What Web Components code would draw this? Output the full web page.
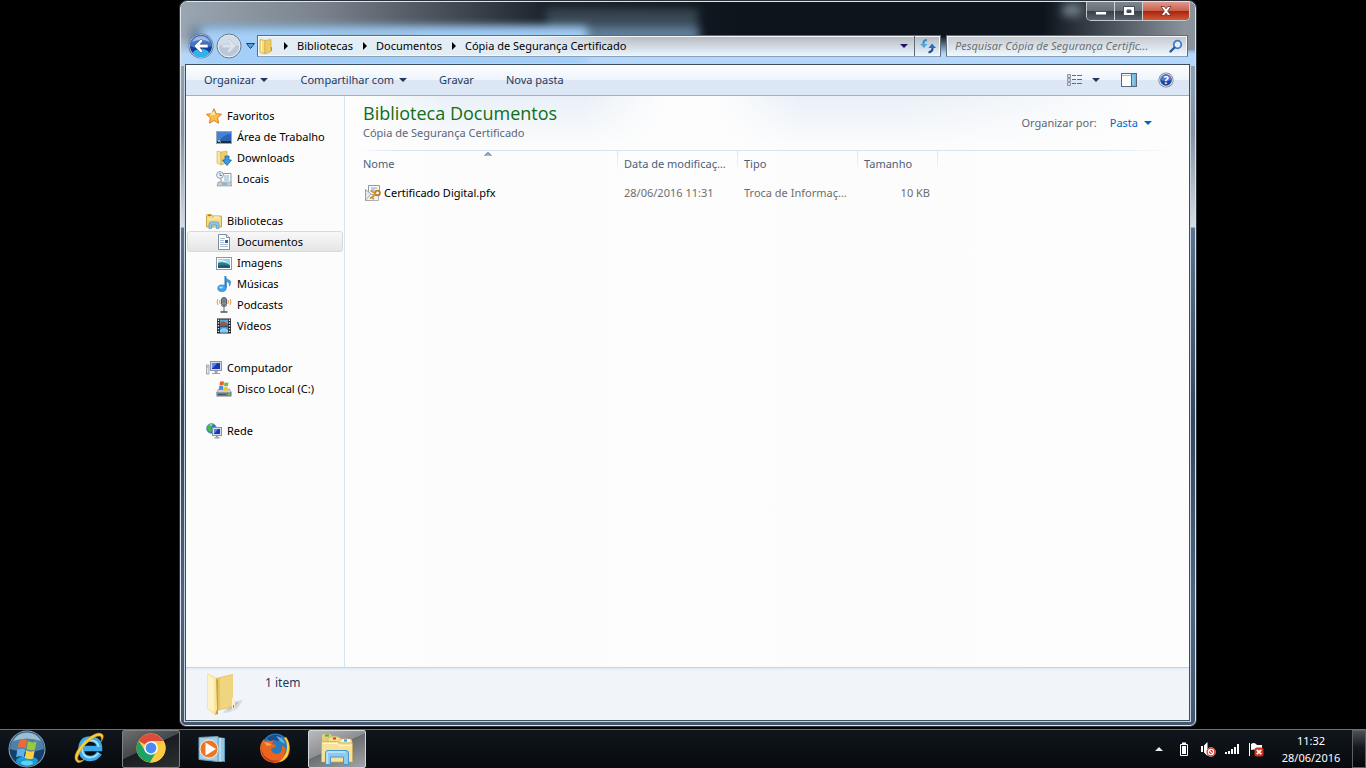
<!DOCTYPE html>
<html lang="pt-BR">
<head>
<meta charset="utf-8">
<title>Cópia de Segurança Certificado</title>
<style>
  body {
    margin: 0;
    background: #000;
    font-family: "Noto Sans", "Open Sans", sans-serif;
    font-size: 11px;
    line-height: 16px;
  }
</style>
</head>
<body>
<win-desktop>
  <explorer-window>
    <address-row slot="address"></address-row>
    <command-bar slot="commands"></command-bar>
    <nav-pane slot="nav">
      <nav-group icon="star" label="Favoritos">
        <nav-item icon="desktop">Área de Trabalho</nav-item>
        <nav-item icon="downloads">Downloads</nav-item>
        <nav-item icon="places">Locais</nav-item>
      </nav-group>
      <nav-group icon="libraries" label="Bibliotecas">
        <nav-item icon="document" selected>Documentos</nav-item>
        <nav-item icon="picture">Imagens</nav-item>
        <nav-item icon="music">Músicas</nav-item>
        <nav-item icon="podcast">Podcasts</nav-item>
        <nav-item icon="video">Vídeos</nav-item>
      </nav-group>
      <nav-group icon="computer" label="Computador">
        <nav-item icon="disk">Disco Local (C:)</nav-item>
      </nav-group>
      <nav-group icon="network" label="Rede"></nav-group>
    </nav-pane>
    <library-header slot="content">
      <span slot="title">Biblioteca Documentos</span>
      <span slot="subtitle">Cópia de Segurança Certificado</span>
    </library-header>
    <file-list slot="content"></file-list>
    <details-pane slot="details">1 item</details-pane>
  </explorer-window>
  <task-bar slot="taskbar">
    <task-button icon="ie" label="Internet Explorer"></task-button>
    <task-button icon="chrome" label="Google Chrome" state="open"></task-button>
    <task-button icon="wmp" label="Windows Media Player"></task-button>
    <task-button icon="firefox" label="Mozilla Firefox"></task-button>
    <task-button icon="explorer" label="Windows Explorer" state="active"></task-button>
    <system-tray slot="tray"></system-tray>
  </task-bar>
</win-desktop>

<script>
const ICONS = {
  caret: ["8 4", `<path d="M0 0h8L4 4z" fill="currentColor"/>`],
  recent: ["9 6", `<path d="M.5.5h8l-4 5z" fill="#58a4dc" stroke="#1b3f6e"/>`],
  crumb: ["4 8", `<path d="M0 0l4 4-4 4z" fill="currentColor"/>`],
  up: ["8 4", `<path d="M0 4h8L4 0z" fill="#e8eaec"/>`],
  sort: ["8 5", `<path d="M0 5h8L4 1z" fill="#9cc4da"/><path d="M1 4.500L4 1.500l3 3" fill="none" stroke="#3f6076"/>`],

  // navigation buttons
  back: ["26 26", `
    <circle cx="13" cy="13" r="12.500" fill="#6d7c8c"/><circle cx="13" cy="13" r="11.500" fill="#e3edf7"/>
    <circle cx="13" cy="13" r="11" fill="#123f9c"/>
    <path d="M2 13a11 11 0 0 1 22 0q-11 5-22 0z" fill="#4375c9"/><path d="M4 9a10 10 0 0 1 18 0q-9-4-18 0z" fill="#9db9e6"/>
    <ellipse cx="13" cy="20" rx="8" ry="4" fill="#2bb4ee"/>
    <path d="M13 6l-7 7 7 7 2-2-3-3.300h8v-3.400h-8L15 8z" fill="#fff" stroke="#1d428c" stroke-width=".5"/>`],
  forward: ["26 26", `
    <circle cx="13" cy="13" r="12" fill="#c5d2df" stroke="#6c7a89"/>
    <circle cx="13" cy="13" r="10.800" fill="#b9c8d8" stroke="#e9f0f6"/>
    <path d="M3 12a10 10 0 0 1 20 0q-10 4-20 0z" fill="#d3dde7"/>
    <path d="M13 6l7 7-7 7-2-2 3-3.300H6v-3.400h8L11 8z" fill="#dbe4ec" stroke="#b4c1ce" stroke-width=".5"/>`],
  refresh: ["16 16", `
    <path d="M7 2Q3 2 3.500 6" fill="none" stroke="#2f8ed6" stroke-width="2"/><path d="M0 6h7.500L4 10z" fill="#4fa8e4"/>
    <path d="M8.500 14.500q4.500-1 4-5" fill="none" stroke="#1a4f9a" stroke-width="2"/><path d="M8.500 10h7.500L12 5.500z" fill="#2a6fb8"/>`],
  search: ["14 14", `
    <circle cx="8.500" cy="5.500" r="3.800" fill="#e3eef8" stroke="#3d7cc4" stroke-width="1.800"/>
    <path d="M5.500 8.500L1.500 12.500" stroke="#2758a5" stroke-width="2.400" stroke-linecap="round"/>`],

  // caption glyphs
  minimize: ["12 12", `<rect x=".5" y="6.500" width="11" height="3.500" fill="#fff" stroke="#4b5058"/>`],
  maximize: ["12 12", `<path d="M.5 1.500h11v9H.5zM4 5v2.500h4V5z" fill="#fff" fill-rule="evenodd" stroke="#4b5058"/>`],
  close: ["12 12", `<path d="M1 1.500h3.200L6 3.800 7.800 1.500H11L7.700 6l3.300 4.500H7.800L6 8.200l-1.800 2.300H1L4.300 6z" fill="#fff" stroke="#6b2b2b" stroke-width=".8"/>`],

  // command bar
  views: ["16 16", `
    <path d="M1.500 2.500h3v3h-3zM1.500 6.500h3v3h-3zM1.500 10.500h3v3h-3z" fill="#fff" stroke="#8d97a3"/>
    <path d="M2.500 4h1M2.500 12h1" stroke="#4472b5"/><path d="M2.500 8h1" stroke="#c03a26"/>
    <path d="M6 3.500h4M11 3.500h5M6 7.500h4M11 7.500h5M6 11.500h4M11 11.500h5" stroke="#5f6b7a"/>`],
  preview: ["16 16", `
    <rect x=".5" y="1.500" width="15" height="13" fill="#fff" stroke="#56687f"/>
    <path d="M1 3.500h9" stroke="#a9b9cb"/><path d="M10.500 2v12" stroke="#56687f"/><rect x="11" y="2" width="4" height="12" fill="#6fb9dc"/>
    <path d="M12 3v10" stroke="#a7dbf0"/>`],
  help: ["16 16", `
    <circle cx="8" cy="8" r="7.600" fill="#7b828c"/><circle cx="8" cy="8" r="6.800" fill="#e1e4e8"/>
    <circle cx="8" cy="8" r="5.800" fill="#1d46a4"/><path d="M2.500 8a5.500 5.500 0 0 1 11 0Q8 10 2.500 8z" fill="#527ccf"/>
    <text x="8" y="12" font-size="11" font-weight="700" text-anchor="middle" fill="#fff">?</text>`],

  // navigation pane
  folder: ["16 16", `
    <path d="M2 1.500l5 1V16l-5-2z" fill="#f5dd84" stroke="#c9a23c" stroke-width=".6"/>
    <path d="M7 2.500l6-1v12L7 16z" fill="#eccb62" stroke="#c9a23c" stroke-width=".6"/>
    <path d="M3.500 3v11" stroke="#fff6c8"/><path d="M13 9h1v4h-1z" fill="#59a8d8"/>`],
  star: ["16 16", `
    <path d="M8 .8l2.200 4.900 5.300.6-4 3.600 1.100 5.300L8 12.500l-4.600 2.700 1.100-5.300-4-3.600 5.300-.6z" fill="#f9c14a" stroke="#e07a22"/>
    <path d="M8 3l1.200 3.600-5.600.6" fill="#fff0b0"/>`],
  desktop: ["16 16", `
    <rect x=".5" y="2.500" width="15" height="12" fill="#2d62b6" stroke="#93a8bd"/>
    <path d="M1 3h14v2Q8 5 3 12H1z" fill="#4681d2"/><path d="M1 12h14v2H1z" fill="#1c2c44"/>
    <path d="M2 11h2v2H2z" fill="#64d2ee"/><path d="M4 13h1" stroke="#f4c63b"/>`],
  downloads: ["16 16", `
    <path d="M1 1l4 1v13l-4-2z" fill="#f8e59a" stroke="#d1aa46" stroke-width=".6"/>
    <path d="M5 2l6-1v12l-6 2z" fill="#eccf70" stroke="#d1aa46" stroke-width=".6"/>
    <path d="M9 6h4v4h2.500L11 15.500 6.500 10H9z" fill="#3b9ade" stroke="#1d64a8" stroke-width=".8"/>`],
  places: ["16 16", `
    <path d="M5 2.500h10v9H5z" fill="#f7f9fb" stroke="#8c979f"/><path d="M8 5h5M8 7h5M8 9h5" stroke="#8cb4d0"/>
    <path d="M2 11h13l1 4H1z" fill="#c4cbd1" stroke="#8b949c" stroke-width=".6"/><path d="M6 13h5" stroke="#4d9bd0"/>
    <circle cx="4" cy="4" r="3.400" fill="#eef3f8" stroke="#8d9cb0"/><path d="M4 2v2.500h2" fill="none" stroke="#54657c" stroke-width=".8"/>`],
  libraries: ["16 16", `
    <path d="M.5 2.500q0-1 1-1h4l1 1.500h8q1 0 1 1v10H.5z" fill="#f2d77e" stroke="#c8a546"/>
    <path d="M2 2.500h3" stroke="#3bb23e"/><path d="M8 4h5" stroke="#fff"/><path d="M1 6h14" stroke="#fdf1bb"/>
    <path d="M3 15.500v-4q0-2.500 2.500-2.500h5q2.500 0 2.500 2.500v4h-2.500V12h-5v3.500z" fill="#8fc8ee" stroke="#4d94c8" stroke-width=".7"/>`],
  document: ["16 16", `
    <path d="M2.500.5h8l3 3v12h-11z" fill="#fff" stroke="#838f9b"/><path d="M10.500.5v3h3" fill="#dce6f0" stroke="#838f9b"/>
    <path d="M4 4.500h5M4 6.500h4M4 8.500h4M4 10.500h8M4 12.500h8" stroke="#a9bdd2"/><path d="M9 6h3v3H9z" fill="#2a62ae"/>`],
  picture: ["16 16", `
    <rect x=".5" y="2.500" width="15" height="12" fill="#fff" stroke="#8b98a5"/>
    <path d="M2 4h12v9H2z" fill="#9bd2f1"/><path d="M2 8q6-2 12 2v3H2z" fill="#2e7f6d"/><path d="M2 11q6-2 12 0v2H2z" fill="#1c558e"/>
    <path d="M2 6q5-1 8 1" stroke="#fff" fill="none"/>`],
  music: ["16 16", `
    <path d="M9 0q1 3 4 4t.5 6q.5-4-3-4.500V12" fill="#3f9fe0" stroke="#1e6fb4" stroke-width=".5"/>
    <path d="M8.500 0h1.700v12H8.500z" fill="#2b7cc4"/><ellipse cx="6" cy="12.200" rx="4.200" ry="3.300" fill="#3fa5e8" stroke="#1e6fb4" stroke-width=".6"/>
    <ellipse cx="5" cy="11.500" rx="2" ry="1" fill="#a9ddfa"/>`],
  podcast: ["16 16", `
    <path d="M2 2Q0 5 2 8M4.200 3Q3 5 4.200 7M14 2q2 3 0 6M11.800 3q1.200 2 0 4" fill="none" stroke="#eb9a35"/>
    <rect x="5.500" y=".5" width="5" height="8" rx="2.500" fill="#9aa3ad" stroke="#4c545e"/><path d="M6 3h4M6 5h4M8 1v7" stroke="#5a636d" stroke-width=".7"/>
    <path d="M5 8q3 3.500 6 0M8 10v5" fill="none" stroke="#646e79"/><path d="M4.500 15h7" stroke="#4c545e" stroke-width="1.500"/>`],
  video: ["16 16", `
    <path d="M1 .5h14v15H1z" fill="#20262d"/><path d="M4 1.500h8v6H4z" fill="#5ba3dd"/><path d="M4 8.500h8v6H4z" fill="#3f90d8"/>
    <path d="M4 5l3-2 5 3v1.500H4z" fill="#9c5a3d"/><path d="M4 12q4-4 8 0v2.500H4z" fill="#8ecbf1"/>
    <path d="M2.500 1.500v14M13.500 1.500v14" stroke="#e4eaf0" stroke-width="1.400" stroke-dasharray="1.400 1.400"/>`],
  computer: ["16 16", `
    <rect x=".5" y="5" width="2.500" height="9" fill="#dfe4e8" stroke="#88929b" stroke-width=".7"/><path d="M1.200 7h1" stroke="#3ebf3e"/>
    <rect x="4.500" y="1.500" width="11" height="9" fill="#d2dae2" stroke="#8995a2"/><path d="M6 3h8v6H6z" fill="#1a35b8"/><path d="M6 3h5L7 8H6z" fill="#5c88e4"/>
    <path d="M8.500 11h3v2h2.500v1H6v-1h2.500z" fill="#9aa4ae"/>`],
  disk: ["16 16", `
    <path d="M2.500 8h11l2 4H.5z" fill="#c9d0d6" stroke="#7e8992" stroke-width=".6"/><path d="M.5 11.500h15v4H.5z" fill="#717c86"/>
    <path d="M2 13.500h8" stroke="#4d565f"/><path d="M12 13.500h2" stroke="#5be24b" stroke-width="1.500"/>
    <path d="M4 .8q2-1.200 4 0L7.500 4.500q-2-1-4 0z" fill="#e8602c"/><path d="M8.500 1.300q2 1 4 0L12 4.700q-2 1-4 0z" fill="#79b83a"/>
    <path d="M3.300 5.200q2-1.200 4 0L6.800 9q-2-1-4 0z" fill="#3f8ddb"/><path d="M7.800 5.500q2 1 4 0l-.5 3.700q-2 1-4 0z" fill="#f7c531"/>`],
  network: ["16 16", `
    <circle cx="5.500" cy="5.500" r="5" fill="#2d6fd0" stroke="#7fa3c6" stroke-width=".7"/>
    <path d="M2 2.500q3-3 5-1L5 4.500l1 3-2 2Q1 7.500 1 4.500z" fill="#46b84d"/><path d="M4 2l2 0" stroke="#d9f5ff"/>
    <rect x="6.500" y="4.500" width="9" height="8" fill="#d6dee7" stroke="#8792a0"/><path d="M8 6h6v5H8z" fill="#1737bb"/><path d="M8 6h4L9 10H8z" fill="#5a85e6"/>
    <path d="M10 13h2v1h1.500v1.500h-5V14H10z" fill="#9aa4ae"/>`],

  // file list and details
  certificate: ["16 16", `
    <path d="M3.500.5h11v10h-11z" fill="#f7f9fb" stroke="#8f9aa6"/><path d="M6 3h6M6 5h4" stroke="#7ca6cc"/>
    <path d="M.5 4.500l5 4v7h-5z" fill="#e5e9ed" stroke="#98a2ac"/><path d="M.5 15.500l5-6h8v6z" fill="#f3f5f7" stroke="#98a2ac" stroke-width=".8"/>
    <circle cx="12.500" cy="8" r="2.400" fill="none" stroke="#c67e18" stroke-width="1.800"/>
    <path d="M10.500 9.500L5 13.500M5.500 5.500l5 3" stroke="#d89424" stroke-width="1.800"/>
    <path d="M7.500 12.500l1.200 1.800" stroke="#c67e18" stroke-width="1.400"/>`],
  folderOpen: ["40 44", `
    <path d="M24 30l13-2-5 8q-7 5-15 5z" fill="#d9dde3"/><path d="M26 31l7-1-4 5-8 4z" fill="#b9bfc7"/>
    <path d="M10 6l17-4v33L10 39z" fill="#e6c45e"/><path d="M14 6l13-3v31l-13 3z" fill="#f0d580"/>
    <path d="M1 1l9 4q2 1 2 4v33l-3 1-8-6z" fill="#f8e6a0"/><path d="M2 3l6 4v33l-6-4z" fill="#fdf3c6"/>
    <path d="M10 6q2 1 2 3v33l-3 1 2-6z" fill="#c8a144"/><path d="M26 26h3v10l-3 2z" fill="#f7f1d6"/><path d="M27 33h1v3h-1z" fill="#4a97d2"/>`],

  // taskbar
  start: ["40 38", `
    <circle cx="20" cy="19" r="18.500" fill="#8fa7b9"/><circle cx="20" cy="19" r="17.500" fill="#163f6c"/>
    <path d="M3 19a17 17 0 0 1 34 0q-17 6-34 0z" fill="#4f80a6"/><path d="M6 11a16 16 0 0 1 28 0q-14-5-28 0z" fill="#9dbdd2"/>
    <ellipse cx="20" cy="31" rx="11" ry="5" fill="#1d9ad6"/><ellipse cx="20" cy="33" rx="6" ry="2.500" fill="#53d7f8"/>
    <path d="M12.500 10.500q4-2.500 7.500 0l-1.500 8q-4-2.500-8 0z" fill="#ee6a2f"/><path d="M21 11q4 2.500 8.500.5l-1.500 8q-4 2-8.500-.5z" fill="#9bc83d"/>
    <path d="M10.200 19.800q4-2.300 8 0l-1.500 7.500q-3.700-2.300-7.500 0z" fill="#5fb2ea"/><path d="M19.200 20.200q4 2.300 8.500.5l-1.500 7.500q-4 2-8.500-.5z" fill="#fbd042"/>`],
  ie: ["32 34", `
    <path d="M26.500 21Q23 26.500 17 26.500 8 26 8 16 9 7 17 7q9.500.5 9.500 9.500H9" fill="none" stroke="#3fa9e8" stroke-width="5.500"/>
    <path d="M25.500 21Q22 25.500 17 25.500 9 25 9 16q1-8 8-8 8 .5 8.500 7" fill="none" stroke="#a5e1fb" stroke-width="1.800"/>
    <path d="M4 30Q-2 25 9 12 23-2 29 2q3 2-1 8 1.500-5-1-6Q22 3 12 13 3 24 5 28q2 2 7-1-5 5-8 3z" fill="#f9cf3e" stroke="#c98f16" stroke-width=".6"/>`],
  chrome: ["32 34", `
    <circle cx="16" cy="16" r="14.500" fill="#fbcb45"/>
    <path d="M16 16L3.500 8.700A14.500 14.500 0 0 1 28.500 9H16z" fill="#dc4b3e"/>
    <path d="M16 16l-5.500 3.500L3.500 8.700a14.500 14.500 0 0 0 11.500 21.700L21 20z" fill="#1ca261"/>
    <path d="M16 9h12.700A14.500 14.500 0 0 1 15 30.500L22 19.500z" fill="#fbcb45"/>
    <circle cx="16" cy="16" r="6.800" fill="#fff"/><circle cx="16" cy="16" r="5.400" fill="#4a8af4"/>`],
  wmp: ["32 32", `
    <path d="M19 4l9 1v24l-9-1z" fill="#5b9ac2"/><path d="M17 4l8 1v24l-8-1z" fill="#94c9e6"/><path d="M23 5v23M26 5v23" stroke="#d3edf8"/>
    <path d="M2 4.500l19-1v25l-19-2z" fill="#a3cfe6" stroke="#68a0bf"/><circle cx="12" cy="16" r="9" fill="#ee7622" stroke="#fff" stroke-width=".8"/>
    <path d="M8.500 9.500l10.500 6.500-10.500 6.500z" fill="#fff"/>`],
  firefox: ["32 34", `
    <circle cx="16.500" cy="15" r="13.500" fill="#2b79bd"/><path d="M8 6q7-6 14-2l-2 5-5-1-4 3z" fill="#1c4c8b"/><path d="M17 4q7 1 9 8l-5-3z" fill="#5cb6e7"/>
    <path d="M26 4q5 5 5 13-1 13-15 14Q2 30 1 17q0-6 4-10l1 3q3-2 6-1l3-1-2 4 4 1-1 2-4 2q1 5 6 5 6-1 5-8 6 1 2 9 4-2 4-9 0-6-3-10z" fill="#ea6520"/>
    <path d="M27 5q4 6 3 13-1 10-10 12 8-6 8-15 0-6-3-9z" fill="#fbd238"/><path d="M2 15q1 9 8 12 6 3 12 0-7 6-14 1Q2 24 2 15z" fill="#c53a1d"/>
    <path d="M5 10l5 1 3 2-5 1z" fill="#fba43a"/>`],
  explorer: ["36 36", `
    <path d="M3 5q0-2 2-2h6l2 2h5v10H3z" fill="#e9cd78"/><path d="M6 4.500h4" stroke="#2fc143" stroke-width="2"/>
    <path d="M9 8q0-2 2-2h9l2 2h6v8H9z" fill="#f3dd97" stroke="#c8a856" stroke-width=".6"/><path d="M14 7.500h3" stroke="#cf3d26" stroke-width="2"/>
    <path d="M20 10q0-2 2-2h9q2 0 2 2v7H20z" fill="#f5e4a6" stroke="#c8a856" stroke-width=".6"/><path d="M23 9.500h8" stroke="#fff" stroke-width="2"/><path d="M25 9.500h3" stroke="#2c9cd8" stroke-width="2"/>
    <path d="M2.500 10.500h16l2 1.500h13v19h-31z" fill="#f7e29b" stroke="#c8a856" stroke-width=".7"/><path d="M4 12.500h14l2 2h12" fill="none" stroke="#fff7d4"/>
    <path d="M6.500 33.500V22q0-2.500 2.500-2.500h18q2.500 0 2.500 2.500v11.500h-5V26h-13v7.500z" fill="#8dcbee" stroke="#4a96c8"/>
    <path d="M8 33V22q0-1 1-1h17" fill="none" stroke="#dcf3fd"/>`],

  // tray
  battery: ["16 16", `<path d="M4.500 3.500h7v11h-7z" fill="none" stroke="#fff"/><path d="M6 1.500h4v1.500H6zM6 5h4v8H6z" fill="#fff"/>`],
  volume: ["16 16", `
    <path d="M1 5h2v6H1zM4 4.500L7.500 1v14L4 11.500z" fill="#fff"/><circle cx="11" cy="11" r="4.500" fill="#d92a1c" stroke="#f3b5ae" stroke-width=".6"/>
    <circle cx="11" cy="11" r="2.600" fill="none" stroke="#fff" stroke-width="1.200"/><path d="M9.200 9.200l3.600 3.600" stroke="#fff" stroke-width="1.200"/>`],
  signal: ["16 16", `<path d="M1 11h2v2H1zM4 10h2v3H4zM7 8h2v5H7zM10 6h2v7h-2zM13 3h2v10h-2z" fill="#fff"/>`],
  flag: ["16 16", `
    <path d="M1 2h1v13H1zM3 3q3-2 5 0l1 1h5v5H8Q6 8 3 9z" fill="#fff"/><rect x="6.500" y="6.500" width="9" height="9" rx="2.500" fill="#d6301f"/>
    <path d="M8.800 8.800l4.400 4.400M13.200 8.800l-4.400 4.400" stroke="#fff" stroke-width="1.700"/>`],
};

// Every element clones its template into an open shadow root.
class WinElement extends HTMLElement {
  constructor() {
    super();
    this.attachShadow({ mode: "open" });
  }

  connectedCallback() {
    const template = document.createElement("template");
    template.innerHTML = /* html */`
      <style>
        :host { box-sizing: border-box; }
        *, *::before, *::after { box-sizing: border-box; }
        button {
          display: flex;
          align-items: center;
          padding: 0;
          border: 0;
          background: none;
          color: inherit;
          font: inherit;
        }
        a { color: inherit; text-decoration: none; }
        ${this.styles}
      </style>
      ${this.markup}`;
    this.shadowRoot.replaceChildren(template.content.cloneNode(true));
  }
}

class WinIcon extends WinElement {
  get styles() {
    return /* css */`
      :host { display: inline-flex; flex: none; }
      svg { display: block; }
    `;
  }

  get markup() {
    const [box, drawing] = ICONS[this.getAttribute("name")];
    const [width, height] = box.split(" ");
    return `<svg width="${width}" height="${height}" viewBox="0 0 ${box}" aria-hidden="true">${drawing}</svg>`;
  }
}

class WinDesktop extends WinElement {
  get styles() {
    return /* css */`
      :host { display: flex; flex-direction: column; min-height: 100vh; background: #000; }
      main { display: flex; flex: 1; padding: 1px 170px 3px 180px; }
      ::slotted(explorer-window) { flex: 1; }
    `;
  }

  get markup() {
    return `<main><slot></slot></main><slot name="taskbar"></slot>`;
  }
}

class ExplorerWindow extends WinElement {
  get styles() {
    return /* css */`
      :host {
        position: relative;
        isolation: isolate;
        display: flex;
        flex-direction: column;
        min-width: 0;
        padding: 0 5px 4px 4px;
        border: 1px solid #dde4ea;
        border-radius: 7px 7px 6px 6px;
        box-shadow: 0 0 0 1px #2c333b;
        background:
          linear-gradient(#8fa3b8 60px, #8492a2 130px, #d5dce3 225px, #5b7390 226px, #33475e 420px, #4d6583 600px, #42566e);
      }
      /* what shows, blurred, through the title bar's glass */
      .glass {
        position: absolute;
        inset: 0 0 auto;
        z-index: -1;
        height: 64px;
        overflow: hidden;
        border-radius: 6px 6px 0 0;
        background:
          linear-gradient(90deg, #0d141c00 85%, #8a939c 99%) 0 0 / 100% 48px no-repeat,
          linear-gradient(#b4d8fb00 34px, #b4d8fb 52px),
          linear-gradient(90deg, #9aa6b2, #79828c 14%, #1b232b 36%, #0d141c 55%);
      }
      .glass i { position: absolute; filter: blur(5px); }
      .panel { left: 36%; width: 15%; top: 7px; height: 30px; background: #3a4855; }
      .strip { left: 1%; width: 50%; top: 25px; height: 22px; background: #62809c; }
      .sheet { left: 2%; width: 38%; top: 25px; height: 60px; background: #a4cff8; }
      .spot { left: 87%; width: 18px; top: 2px; height: 12px; background: #75828e; }
      .shade { left: 14%; width: 9%; top: 34px; height: 14px; background: #93b2cf; }
      header { display: flex; flex-direction: column; height: 62px; }
      .client {
        display: grid;
        flex: 1;
        grid-template: auto 1fr auto / 159px minmax(0, 1fr);
        border: 1px solid #3f4e5f;
        background: #fcfcfc;
        box-shadow: 0 0 0 1px #c5d3e1;
      }
      .commands, .details { grid-column: 1 / -1; }
      .nav { display: grid; }
      .content {
        background: linear-gradient(90deg, #fdfdfd 2%, #fdfdfd00 12%, #fdfdfd00 28%, #fdfdfd 38%, #fdfdfd 44%, #fdfdfd00 54%, #fdfdfd00 65%, #fdfdfd 95%),
          linear-gradient(#e9f0f8, #fcfcfc 50px);
      }
    `;
  }

  get markup() {
    return /* html */`
      <div class="glass">
        <i class="panel"></i><i class="strip"></i><i class="sheet"></i><i class="shade"></i><i class="spot"></i>
      </div>
      <header>
        <caption-buttons></caption-buttons>
        <slot name="address"></slot>
      </header>
      <div class="client">
        <div class="commands"><slot name="commands"></slot></div>
        <div class="nav"><slot name="nav"></slot></div>
        <div class="content"><slot name="content"></slot></div>
        <div class="details"><slot name="details"></slot></div>
      </div>`;
  }
}

class CaptionButtons extends WinElement {
  get styles() {
    return /* css */`
      :host {
        display: flex;
        align-self: flex-end;
        height: 19px;
        border: 1px solid #c3c8ce;
        border-top: 0;
        border-radius: 0 0 5px 5px;
        overflow: hidden;
      }
      button {
        justify-content: center;
        width: 28px;
        border-right: 1px solid #d0d4d8;
        background: linear-gradient(#7e868e, #666e77 50%, #353d46 50%, #5b646e);
      }
      button.close {
        width: 46px;
        border: 0;
        background: linear-gradient(#dd9a8c, #cb5e4b 50%, #a9210b 50%, #cf5a36);
      }
    `;
  }

  get markup() {
    return /* html */`
      <button aria-label="Minimizar"><win-icon name="minimize"></win-icon></button>
      <button aria-label="Maximizar"><win-icon name="maximize"></win-icon></button>
      <button class="close" aria-label="Fechar"><win-icon name="close"></win-icon></button>`;
  }
}

class AddressRow extends WinElement {
  get styles() {
    return /* css */`
      :host {
        display: grid;
        grid-template-columns: auto minmax(0, 1fr) 242px;
        align-items: center;
        margin: auto 2px 5px 3px;
        color: #000;
      }
      .travel { display: flex; align-items: center; gap: 2px; }
      .travel .recent { padding: 0 2px; }
      .address, .search {
        display: flex;
        align-items: center;
        height: 22px;
        border: 1px solid #616c78;
        border-bottom-color: #8ba1b8;
        box-shadow: inset 0 0 0 1px #f4f8fb;
        background: linear-gradient(90deg, #e3edf6 40%, #e6f1fb00 55%), linear-gradient(#b3b8bd, #e6f1fb 90%);
      }
      .address { margin-right: 5px; }
      ol { display: flex; flex: 1; align-items: center; margin: 0; padding: 0; list-style: none; }
      li { display: flex; align-items: center; }
      li win-icon[name=crumb] { margin: 0 9px 0 10px; }
      .refresh { width: 26px; height: 20px; justify-content: center; border-left: 1px solid #616c78; }
      .expand { padding: 0 6px; }
      .expand win-icon { color: #24105e; }
      .search { padding: 0 4px 0 8px; background: linear-gradient(#c3c8cd, #ebf4fb 90%); }
      input {
        flex: 1;
        min-width: 0;
        padding: 0;
        border: 0;
        outline: 0;
        background: none;
        font: inherit;
        font-style: italic;
      }
      input::placeholder { color: #6d7175; opacity: 1; }
    `;
  }

  get markup() {
    const crumbs = ["Bibliotecas", "Documentos", "Cópia de Segurança Certificado"];
    return /* html */`
      <div class="travel">
        <button aria-label="Voltar"><win-icon name="back"></win-icon></button>
        <button aria-label="Avançar"><win-icon name="forward"></win-icon></button>
        <button class="recent" aria-label="Páginas recentes"><win-icon name="recent"></win-icon></button>
      </div>
      <div class="address">
        <ol>
          <li><win-icon name="folder"></win-icon></li>
          ${crumbs.map((crumb) => `<li><win-icon name="crumb"></win-icon><a href="#">${crumb}</a></li>`).join("")}
        </ol>
        <button class="expand" aria-label="Locais anteriores"><win-icon name="caret"></win-icon></button>
        <button class="refresh" aria-label="Atualizar"><win-icon name="refresh"></win-icon></button>
      </div>
      <label class="search">
        <input type="text" aria-label="Pesquisar" placeholder="Pesquisar Cópia de Segurança Certific...">
        <win-icon name="search"></win-icon>
      </label>`;
  }
}

class CommandBar extends WinElement {
  get styles() {
    return /* css */`
      :host {
        display: flex;
        align-items: center;
        gap: 32px;
        height: 31px;
        padding: 0 15px 0 18px;
        border-bottom: 1px solid #a0afc3;
        background: linear-gradient(#fdfeff, #eef4fc 50%, #dce6f4 50%, #dde8f7);
        color: #1e395b;
      }
      button { gap: 5px; }
      .tools { display: flex; align-items: center; gap: 21px; margin-left: auto; }
      .tools button { gap: 10px; }
    `;
  }

  get markup() {
    return /* html */`
      <button>Organizar <win-icon name="caret"></win-icon></button>
      <button>Compartilhar com <win-icon name="caret"></win-icon></button>
      <button>Gravar</button>
      <button>Nova pasta</button>
      <div class="tools">
        <button aria-label="Modo de exibição"><win-icon name="views"></win-icon><win-icon name="caret"></win-icon></button>
        <button aria-label="Painel de visualização"><win-icon name="preview"></win-icon></button>
        <button aria-label="Ajuda"><win-icon name="help"></win-icon></button>
      </div>`;
  }
}

class NavPane extends WinElement {
  get styles() {
    return /* css */`
      :host {
        display: flex;
        flex-direction: column;
        gap: 21px;
        padding: 9px 1px 21px;
        border-right: 1px solid #d6e5f5;
        background: #fcfcfc;
        color: #000;
      }
    `;
  }

  get markup() {
    return `<slot></slot>`;
  }
}

class NavGroup extends WinElement {
  get styles() {
    return /* css */`
      :host { display: flex; flex-direction: column; }
      a { display: flex; align-items: center; gap: 5px; height: 21px; padding-left: 19px; }
    `;
  }

  get markup() {
    return /* html */`
      <a href="#"><win-icon name="${this.getAttribute("icon")}"></win-icon>${this.getAttribute("label")}</a>
      <slot></slot>`;
  }
}

class NavItem extends WinElement {
  get styles() {
    return /* css */`
      :host { display: block; height: 21px; border: 1px solid transparent; border-radius: 3px; }
      :host([selected]) { border-color: #d9d9d9; background: linear-gradient(#f8f8f8, #e5e5e5); }
      a { display: flex; align-items: center; gap: 5px; height: 19px; padding-left: 28px; }
    `;
  }

  get markup() {
    return `<a href="#"><win-icon name="${this.getAttribute("icon")}"></win-icon><slot></slot></a>`;
  }
}

class LibraryHeader extends WinElement {
  get styles() {
    return /* css */`
      :host { display: flex; align-items: center; height: 54px; padding: 0 37px 0 18px; color: #5a6779; }
      .titles { flex: 1; padding-bottom: 4px; }
      h1 {
        margin: 0;
        color: #0e6f17;
        font-family: "Open Sans", "Noto Sans", sans-serif;
        font-size: 18px;
        font-weight: 400;
        line-height: 24px;
      }
      p { margin: 0; }
      .arrange { display: flex; gap: 13px; }
      .arrange button { gap: 6px; color: #0066cc; }
    `;
  }

  get markup() {
    return /* html */`
      <div class="titles">
        <h1><slot name="title"></slot></h1>
        <p><slot name="subtitle"></slot></p>
      </div>
      <div class="arrange">
        <span>Organizar por:</span>
        <button>Pasta <win-icon name="caret"></win-icon></button>
      </div>`;
  }
}

class FileList extends WinElement {
  get styles() {
    return /* css */`
      :host {
        display: block;
        padding: 1px 12px 0;
        background: linear-gradient(90deg, #d5e5f500, #d5e5f5 5%, #d5e5f5 90%, #d5e5f500) 12px 0 / calc(100% - 24px) 1px no-repeat;
      }
      table { width: 581px; border-collapse: collapse; table-layout: fixed; }
      th, td {
        overflow: hidden;
        padding: 0 10px 0 6px;
        font-weight: 400;
        text-align: left;
        text-overflow: ellipsis;
        white-space: nowrap;
      }
      th {
        position: relative;
        height: 25px;
        background: linear-gradient(#d5e5f5, #d5e5f500 22px) right / 1px 100% no-repeat;
        color: #4c607a;
      }
      th win-icon { position: absolute; top: 0; left: 50%; transform: translateX(-50%); }
      td { height: 33px; color: #6d6d6d; }
      td a { display: flex; align-items: center; gap: 3px; padding-left: 2px; color: #000; }
      .name { width: 261px; }
      .size { width: 80px; }
      .number { padding-right: 8px; text-align: right; }
    `;
  }

  get markup() {
    const files = [
      ["Certificado Digital.pfx", "28/06/2016 11:31", "Troca de Informações", "10 KB"],
    ];
    const rows = files.map(([name, date, type, size]) => /* html */`
      <tr>
        <td><a href="#"><win-icon name="certificate"></win-icon>${name}</a></td>
        <td>${date}</td>
        <td>${type}</td>
        <td class="number">${size}</td>
      </tr>`).join("");
    return /* html */`
      <table>
        <thead>
          <tr>
            <th class="name" aria-sort="ascending">Nome<win-icon name="sort"></win-icon></th>
            <th>Data de modificação</th>
            <th>Tipo</th>
            <th class="size">Tamanho</th>
          </tr>
        </thead>
        <tbody>${rows}</tbody>
      </table>`;
  }
}

class DetailsPane extends WinElement {
  get styles() {
    return /* css */`
      :host {
        display: flex;
        gap: 19px;
        height: 53px;
        padding: 4px 20px;
        border-top: 1px solid #c5d5e8;
        background: linear-gradient(#e0eaf6, #f1f5fa 3px);
        color: #1e395b;
        font-size: 12px;
      }
      p { margin: 3px 0; }
    `;
  }

  get markup() {
    return `<win-icon name="folderOpen"></win-icon><p><slot></slot></p>`;
  }
}

class TaskBar extends WinElement {
  get styles() {
    return /* css */`
      :host {
        display: flex;
        height: 39px;
        border-top: 1px solid #6a7076;
        background: linear-gradient(#10161c, #070b10);
      }
      .start { justify-content: center; width: 54px; margin-right: 6px; }
      .tasks { display: flex; flex: 1; gap: 4px; }
    `;
  }

  get markup() {
    return /* html */`
      <button class="start" aria-label="Iniciar"><win-icon name="start"></win-icon></button>
      <div class="tasks"><slot></slot></div>
      <slot name="tray"></slot>`;
  }
}

class TaskButton extends WinElement {
  get styles() {
    return /* css */`
      :host { display: flex; width: 58px; }
      button { flex: 1; justify-content: center; border: 1px solid transparent; border-radius: 2px; }
      :host([state]) button {
        border-color: #7d8184;
        background: linear-gradient(155deg, #6c6e70, #45484a 45%, #1a1d20 46%, #2c2f32);
      }
      :host([state=active]) button {
        border-color: #d4d6d8;
        background: linear-gradient(155deg, #b9bbbd, #8d8f92 45%, #6b6e71 46%, #a2a5a8);
      }
    `;
  }

  get markup() {
    return /* html */`
      <button aria-label="${this.getAttribute("label")}">
        <win-icon name="${this.getAttribute("icon")}"></win-icon>
      </button>`;
  }
}

class SystemTray extends WinElement {
  get styles() {
    return /* css */`
      :host { display: flex; align-items: center; gap: 8px; color: #fff; }
      .expand { margin-right: 5px; }
      .clock {
        flex-direction: column;
        justify-content: center;
        width: 76px;
        margin-left: 1px;
        line-height: 17px;
      }
      .peek {
        align-self: stretch;
        width: 14px;
        margin-left: -5px;
        border: 1px solid #5c6166;
        background: linear-gradient(#4b5055, #15191d 45%, #05080b);
      }
    `;
  }

  get markup() {
    return /* html */`
      <button class="expand" aria-label="Mostrar ícones ocultos"><win-icon name="up"></win-icon></button>
      <win-icon name="battery"></win-icon>
      <win-icon name="volume"></win-icon>
      <win-icon name="signal"></win-icon>
      <win-icon name="flag"></win-icon>
      <button class="clock"><time>11:32</time><time>28/06/2016</time></button>
      <button class="peek" aria-label="Mostrar área de trabalho"></button>`;
  }
}

customElements.define("win-icon", WinIcon);
customElements.define("win-desktop", WinDesktop);
customElements.define("explorer-window", ExplorerWindow);
customElements.define("caption-buttons", CaptionButtons);
customElements.define("address-row", AddressRow);
customElements.define("command-bar", CommandBar);
customElements.define("nav-pane", NavPane);
customElements.define("nav-group", NavGroup);
customElements.define("nav-item", NavItem);
customElements.define("library-header", LibraryHeader);
customElements.define("file-list", FileList);
customElements.define("details-pane", DetailsPane);
customElements.define("task-bar", TaskBar);
customElements.define("task-button", TaskButton);
customElements.define("system-tray", SystemTray);
</script>
</body>
</html>
